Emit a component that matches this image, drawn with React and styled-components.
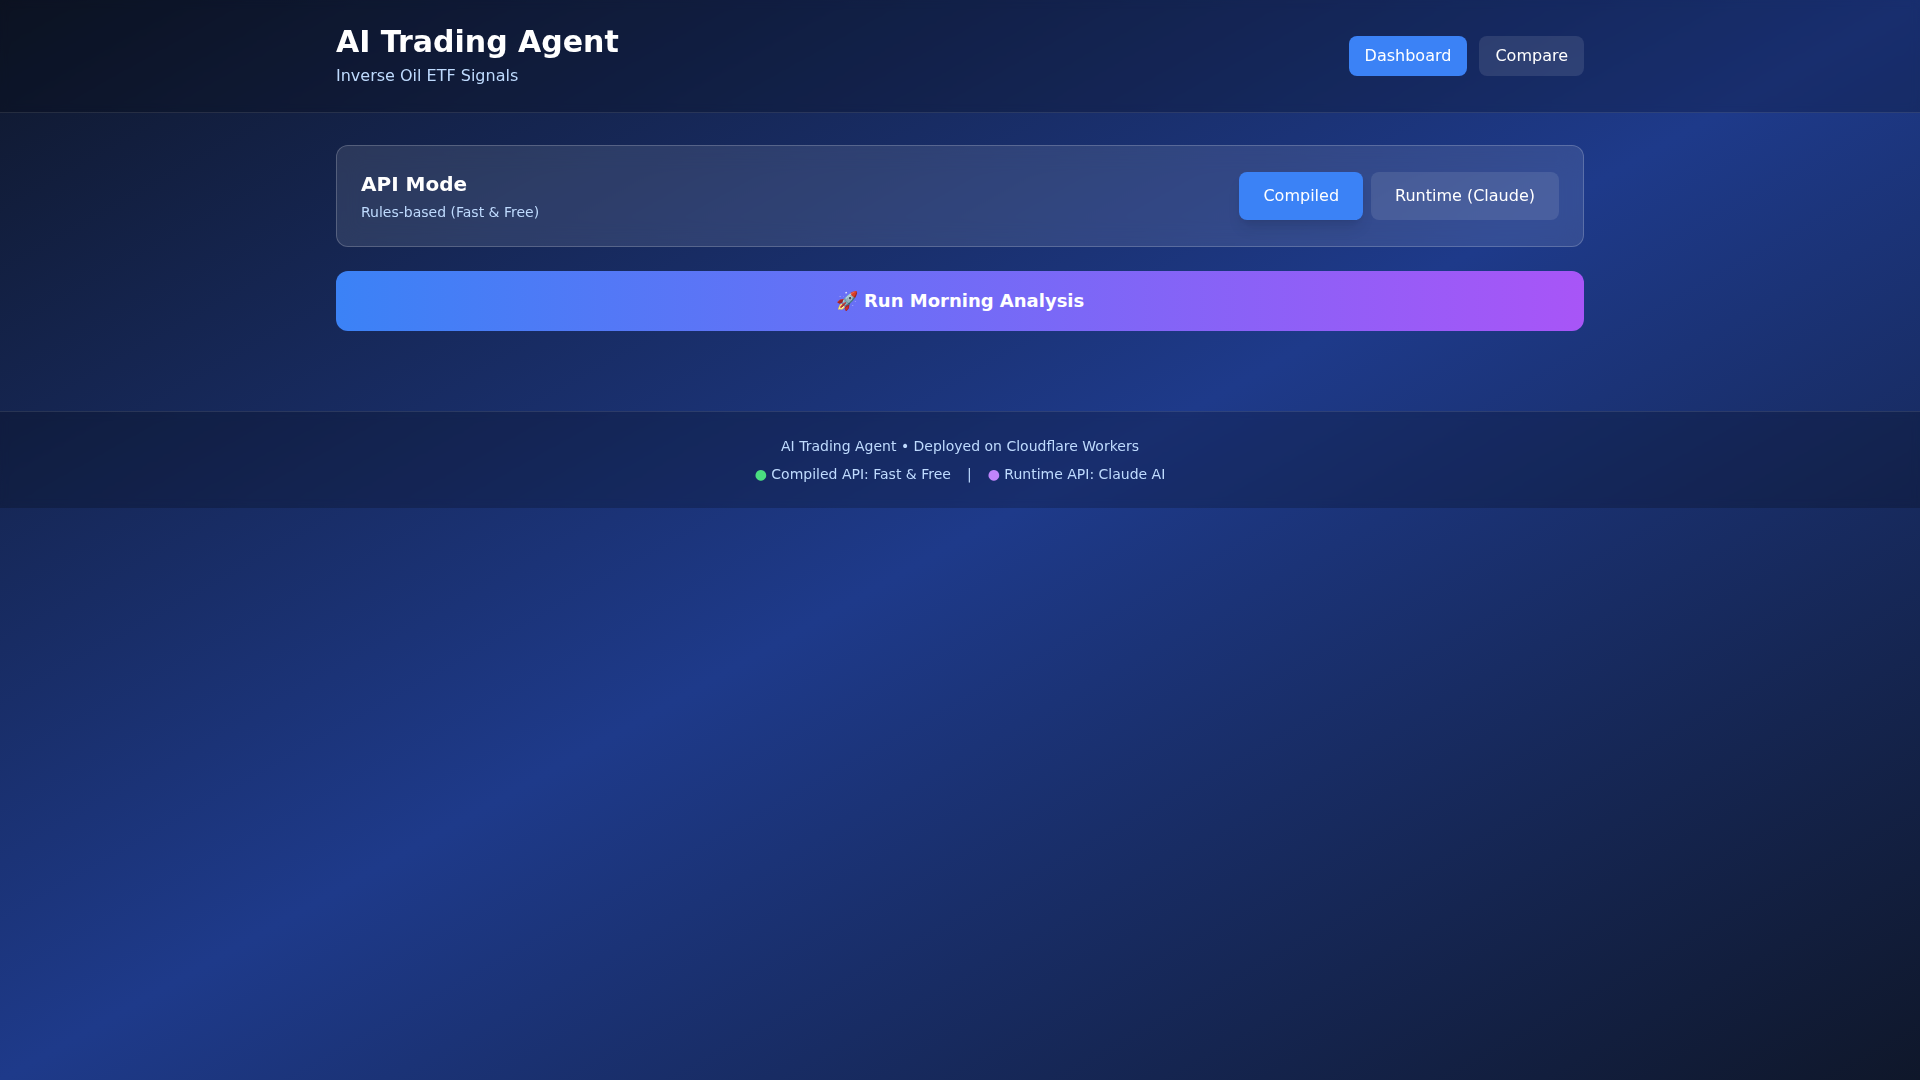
import React, { useState } from 'react';
import styled, { createGlobalStyle } from 'styled-components';

const GlobalStyle = createGlobalStyle`
  * {
    box-sizing: border-box;
    margin: 0;
    padding: 0;
  }

  body {
    font-family: 'DejaVu Sans', sans-serif;
    font-size: 16px;
    line-height: 24px;
    color: white;
  }

  button {
    font: inherit;
    color: inherit;
    border: none;
    cursor: pointer;
  }
`;

const Page = styled.div`
  min-height: 100vh;
  background: linear-gradient(to bottom right, #0f172a, #1e3a8a, #0f172a);
`;

const HeaderContainer = styled.header`
  background: rgba(0, 0, 0, 0.2);
  backdrop-filter: blur(4px);
  border-bottom: 1px solid rgba(255, 255, 255, 0.1);
`;

const Container = styled.div`
  max-width: 1280px;
  margin: 0 auto;
  padding: 24px 16px;
`;

const HeaderContent = styled(Container)`
  display: flex;
  align-items: center;
  justify-content: space-between;
`;

const Title = styled.h1`
  font-size: 30px;
  line-height: 36px;
  font-weight: bold;
`;

const Tagline = styled.p`
  margin-top: 4px;
  color: #bfdbfe;
`;

const Nav = styled.nav`
  display: flex;
  gap: 12px;
`;

const NavButton = styled.button`
  padding: 8px 16px;
  border-radius: 8px;
  background: ${({ $active }) => ($active ? '#3b82f6' : 'rgba(255, 255, 255, 0.1)')};
  transition: background 0.2s;

  &:hover {
    background: ${({ $active }) => ($active ? '#3b82f6' : 'rgba(255, 255, 255, 0.2)')};
  }
`;

const Main = styled(Container).attrs({ as: 'main' })`
  display: flex;
  flex-direction: column;
  gap: 24px;
  padding: 32px 16px;
`;

const ModeCard = styled.section`
  display: flex;
  align-items: center;
  justify-content: space-between;
  padding: 24px;
  border-radius: 12px;
  background: rgba(255, 255, 255, 0.1);
  border: 1px solid rgba(255, 255, 255, 0.2);
  backdrop-filter: blur(12px);
`;

const ModeTitle = styled.h2`
  font-size: 20px;
  line-height: 28px;
  font-weight: bold;
`;

const ModeText = styled.p`
  margin-top: 4px;
  font-size: 14px;
  line-height: 20px;
  color: #bfdbfe;
`;

const ModeButtons = styled.div`
  display: flex;
  gap: 8px;
`;

const ModeButton = styled.button`
  padding: 12px 24px;
  border-radius: 8px;
  background: ${({ $active }) => ($active ? '#3b82f6' : 'rgba(255, 255, 255, 0.1)')};
  box-shadow: ${({ $active }) =>
    $active ? '0 10px 15px -3px rgba(0, 0, 0, 0.1), 0 4px 6px -4px rgba(0, 0, 0, 0.1)' : 'none'};
`;

const RunButton = styled.button`
  && {
    width: 100%;
    padding: 16px 24px;
    border-radius: 12px;
    font-size: 18px;
    line-height: 28px;
    font-weight: bold;
    background: linear-gradient(to right, #3b82f6, #a855f7);
  }
`;

const FooterContainer = styled.footer`
  margin-top: 48px;
  background: rgba(0, 0, 0, 0.2);
  backdrop-filter: blur(4px);
  border-top: 1px solid rgba(255, 255, 255, 0.1);
`;

const FooterContent = styled(Container)`
  font-size: 14px;
  line-height: 20px;
  text-align: center;
  color: #bfdbfe;
`;

const ApiList = styled.p`
  display: flex;
  justify-content: center;
  gap: 16px;
  margin-top: 8px;
`;

const Dot = styled.span`
  color: ${({ $color }) => $color};
`;

const MODES = [
  { id: 'compiled', label: 'Compiled', text: 'Rules-based (Fast & Free)' },
  { id: 'runtime', label: 'Runtime (Claude)', text: 'Claude AI' },
];

function App() {
  const [view, setView] = useState('dashboard');
  const [mode, setMode] = useState(MODES[0]);

  return (
    <>
      <GlobalStyle />
      <Page>
        <HeaderContainer>
          <HeaderContent>
            <div>
              <Title>AI Trading Agent</Title>
              <Tagline>Inverse Oil ETF Signals</Tagline>
            </div>
            <Nav>
              <NavButton $active={view === 'dashboard'} onClick={() => setView('dashboard')}>
                Dashboard
              </NavButton>
              <NavButton $active={view === 'compare'} onClick={() => setView('compare')}>
                Compare
              </NavButton>
            </Nav>
          </HeaderContent>
        </HeaderContainer>

        <Main>
          <ModeCard>
            <div>
              <ModeTitle>API Mode</ModeTitle>
              <ModeText>{mode.text}</ModeText>
            </div>
            <ModeButtons>
              {MODES.map((item) => (
                <ModeButton
                  key={item.id}
                  $active={item.id === mode.id}
                  onClick={() => setMode(item)}
                >
                  {item.label}
                </ModeButton>
              ))}
            </ModeButtons>
          </ModeCard>

          <RunButton>🚀 Run Morning Analysis</RunButton>
        </Main>

        <FooterContainer>
          <FooterContent>
            <p>AI Trading Agent • Deployed on Cloudflare Workers</p>
            <ApiList>
              <span>
                <Dot $color="#4ade80">●</Dot> Compiled API: Fast &amp; Free
              </span>
              <span>|</span>
              <span>
                <Dot $color="#c084fc">●</Dot> Runtime API: Claude AI
              </span>
            </ApiList>
          </FooterContent>
        </FooterContainer>
      </Page>
    </>
  );
}

export default App;
